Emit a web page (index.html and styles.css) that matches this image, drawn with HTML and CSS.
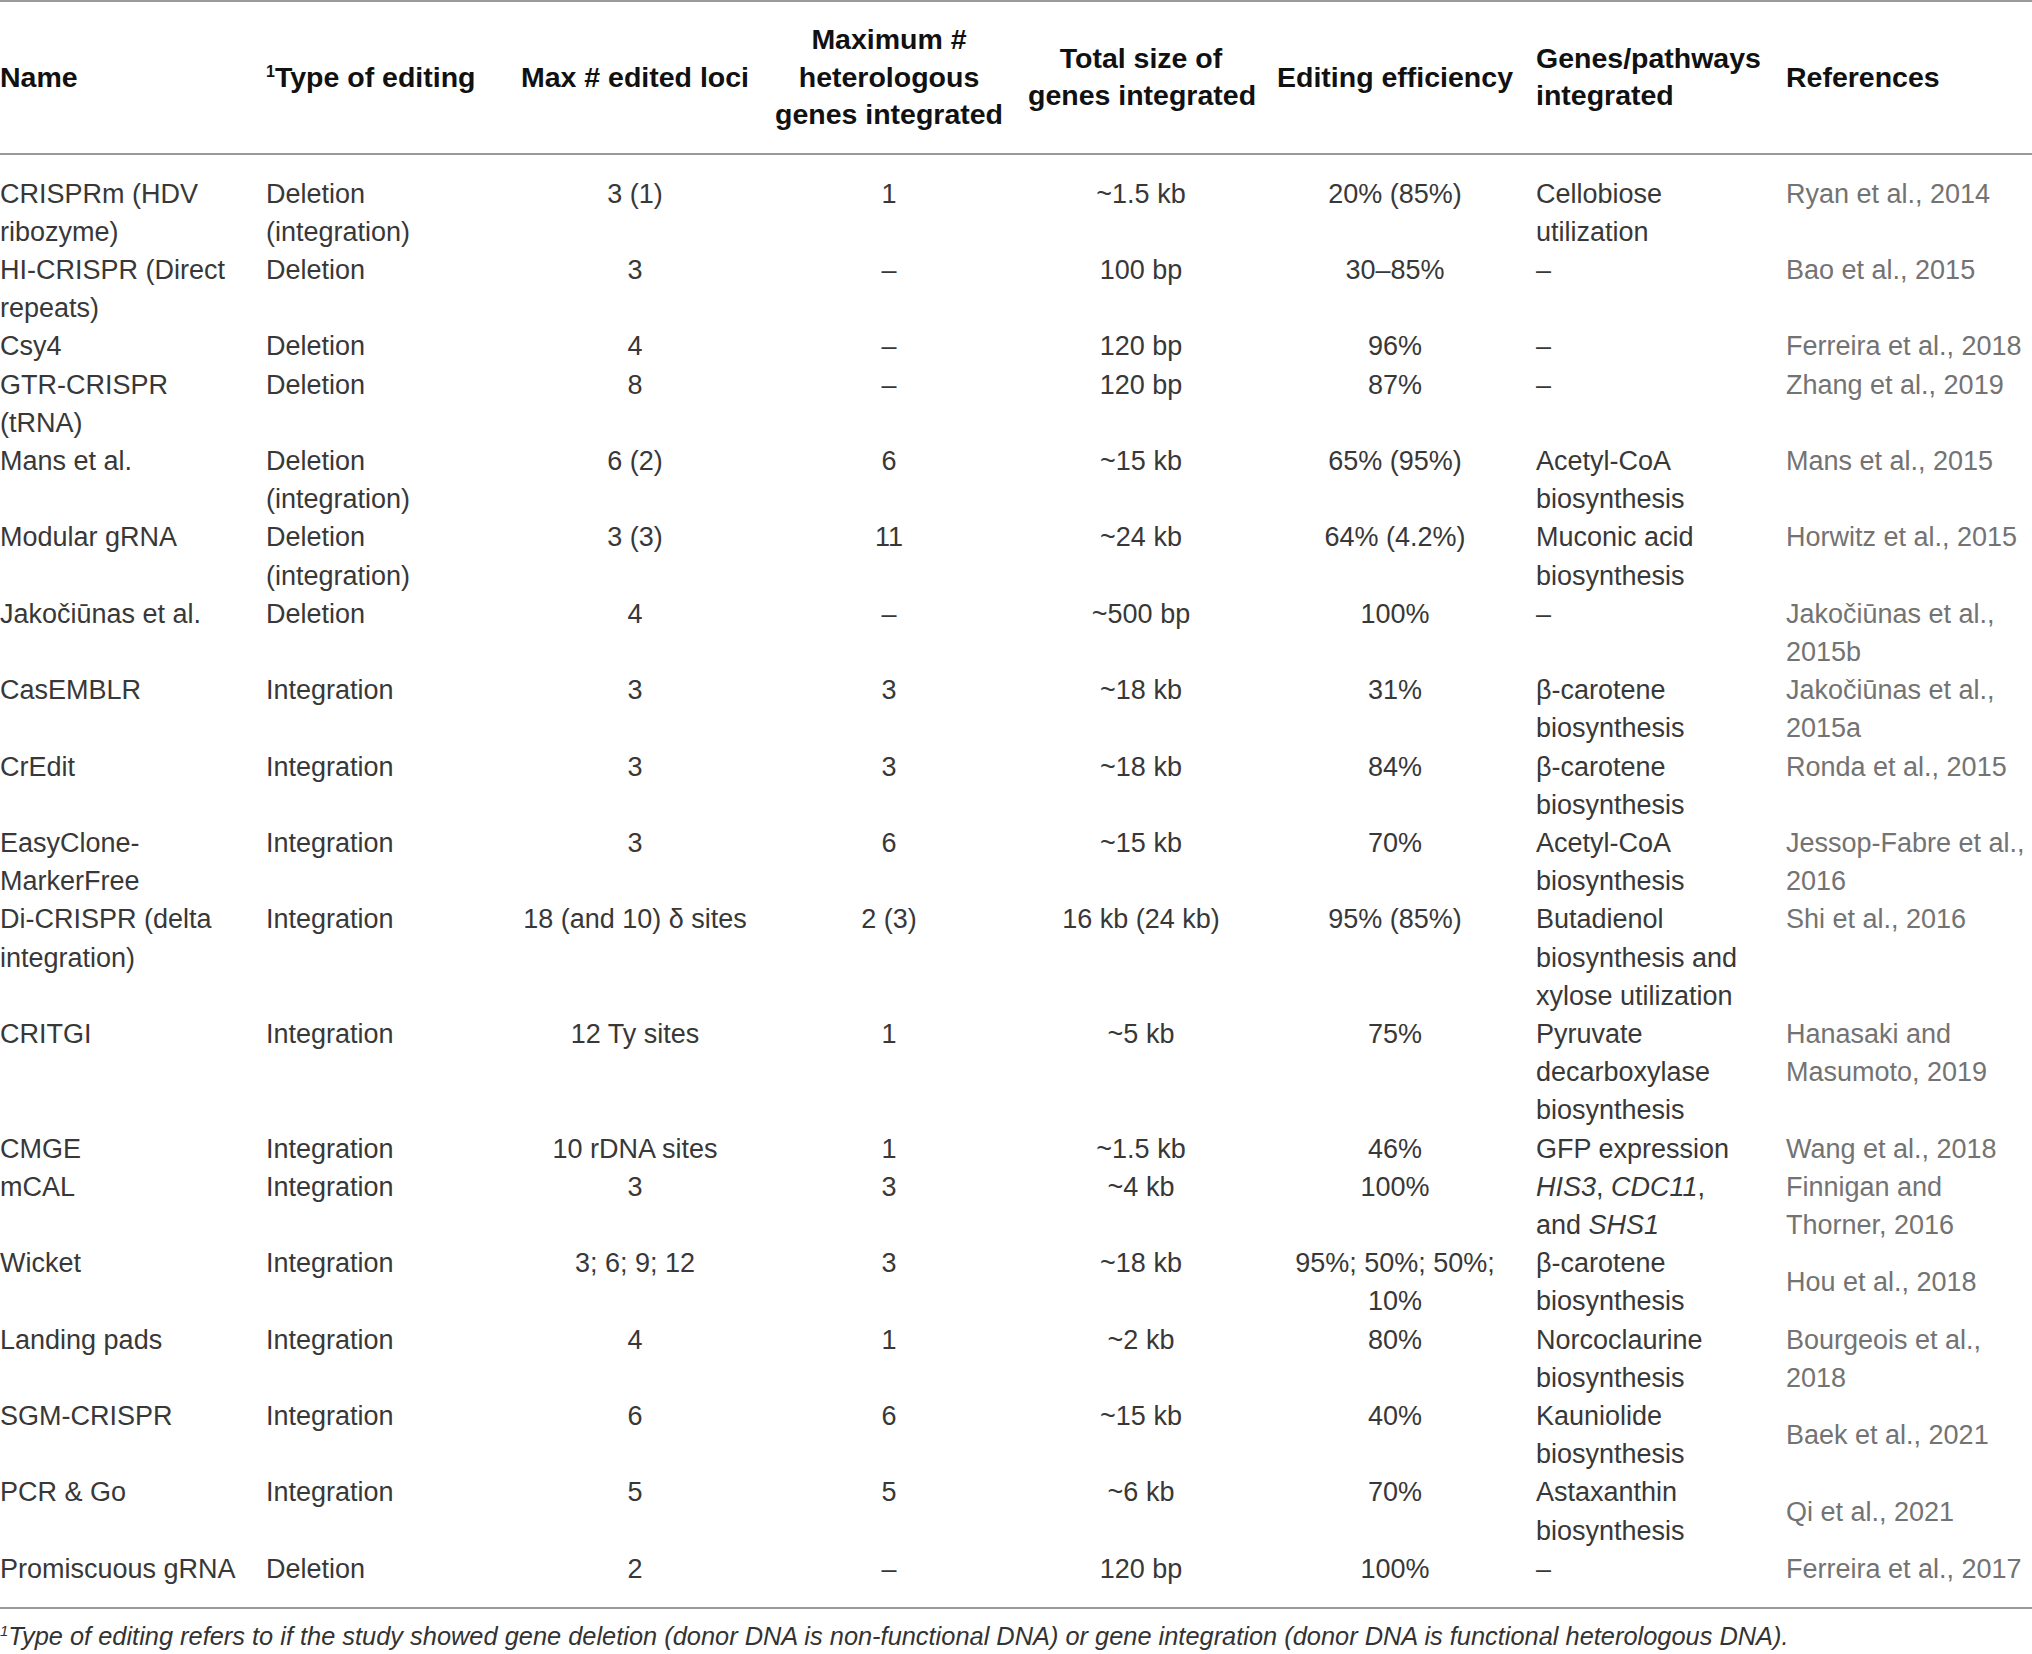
FILE: index.html
```html
<!DOCTYPE html>
<html>

<head>
  <meta charset="utf-8">
  <meta name="viewport" content="width=device-width">
  <title>CRISPR editing tools in yeast</title>
	<link rel="stylesheet" href="styles.css">
</head>

<body>
	<table class="tools">
		<colgroup>
			<col class="w-name">
			<col class="w-type">
			<col class="w-loci">
			<col class="w-het">
			<col class="w-size">
			<col class="w-eff">
			<col class="w-genes">
			<col class="w-refs">
		</colgroup>
		<thead>
			<tr>
				<th>Name</th>
				<th><sup>1</sup>Type of editing</th>
				<th class="c">Max # edited loci</th>
				<th class="c">Maximum #<br>heterologous<br>genes integrated</th>
				<th class="c">Total size of<br>genes integrated</th>
				<th class="c">Editing efficiency</th>
				<th>Genes/pathways<br>integrated</th>
				<th>References</th>
			</tr>
		</thead>
		<tbody>
			<tr>
				<td>CRISPRm (HDV<br>ribozyme)</td>
				<td>Deletion<br>(integration)</td>
				<td class="c">3 (1)</td>
				<td class="c">1</td>
				<td class="c">~1.5 kb</td>
				<td class="c">20% (85%)</td>
				<td>Cellobiose<br>utilization</td>
				<td class="ref">Ryan et al., 2014</td>
			</tr>
			<tr>
				<td>HI-CRISPR (Direct<br>repeats)</td>
				<td>Deletion</td>
				<td class="c">3</td>
				<td class="c">–</td>
				<td class="c">100 bp</td>
				<td class="c">30–85%</td>
				<td>–</td>
				<td class="ref">Bao et al., 2015</td>
			</tr>
			<tr>
				<td>Csy4</td>
				<td>Deletion</td>
				<td class="c">4</td>
				<td class="c">–</td>
				<td class="c">120 bp</td>
				<td class="c">96%</td>
				<td>–</td>
				<td class="ref">Ferreira et al., 2018</td>
			</tr>
			<tr>
				<td>GTR-CRISPR<br>(tRNA)</td>
				<td>Deletion</td>
				<td class="c">8</td>
				<td class="c">–</td>
				<td class="c">120 bp</td>
				<td class="c">87%</td>
				<td>–</td>
				<td class="ref">Zhang et al., 2019</td>
			</tr>
			<tr>
				<td>Mans et al.</td>
				<td>Deletion<br>(integration)</td>
				<td class="c">6 (2)</td>
				<td class="c">6</td>
				<td class="c">~15 kb</td>
				<td class="c">65% (95%)</td>
				<td>Acetyl-CoA<br>biosynthesis</td>
				<td class="ref">Mans et al., 2015</td>
			</tr>
			<tr>
				<td>Modular gRNA</td>
				<td>Deletion<br>(integration)</td>
				<td class="c">3 (3)</td>
				<td class="c">11</td>
				<td class="c">~24 kb</td>
				<td class="c">64% (4.2%)</td>
				<td>Muconic acid<br>biosynthesis</td>
				<td class="ref">Horwitz et al., 2015</td>
			</tr>
			<tr>
				<td>Jakočiūnas et al.</td>
				<td>Deletion</td>
				<td class="c">4</td>
				<td class="c">–</td>
				<td class="c">~500 bp</td>
				<td class="c">100%</td>
				<td>–</td>
				<td class="ref">Jakočiūnas et al.,<br>2015b</td>
			</tr>
			<tr>
				<td>CasEMBLR</td>
				<td>Integration</td>
				<td class="c">3</td>
				<td class="c">3</td>
				<td class="c">~18 kb</td>
				<td class="c">31%</td>
				<td>β-carotene<br>biosynthesis</td>
				<td class="ref">Jakočiūnas et al.,<br>2015a</td>
			</tr>
			<tr>
				<td>CrEdit</td>
				<td>Integration</td>
				<td class="c">3</td>
				<td class="c">3</td>
				<td class="c">~18 kb</td>
				<td class="c">84%</td>
				<td>β-carotene<br>biosynthesis</td>
				<td class="ref">Ronda et al., 2015</td>
			</tr>
			<tr>
				<td>EasyClone-<br>MarkerFree</td>
				<td>Integration</td>
				<td class="c">3</td>
				<td class="c">6</td>
				<td class="c">~15 kb</td>
				<td class="c">70%</td>
				<td>Acetyl-CoA<br>biosynthesis</td>
				<td class="ref">Jessop-Fabre et al.,<br>2016</td>
			</tr>
			<tr>
				<td>Di-CRISPR (delta<br>integration)</td>
				<td>Integration</td>
				<td class="c">18 (and 10) δ sites</td>
				<td class="c">2 (3)</td>
				<td class="c">16 kb (24 kb)</td>
				<td class="c">95% (85%)</td>
				<td>Butadienol<br>biosynthesis and<br>xylose utilization</td>
				<td class="ref">Shi et al., 2016</td>
			</tr>
			<tr>
				<td>CRITGI</td>
				<td>Integration</td>
				<td class="c">12 Ty sites</td>
				<td class="c">1</td>
				<td class="c">~5 kb</td>
				<td class="c">75%</td>
				<td>Pyruvate<br>decarboxylase<br>biosynthesis</td>
				<td class="ref">Hanasaki and<br>Masumoto, 2019</td>
			</tr>
			<tr>
				<td>CMGE</td>
				<td>Integration</td>
				<td class="c">10 rDNA sites</td>
				<td class="c">1</td>
				<td class="c">~1.5 kb</td>
				<td class="c">46%</td>
				<td>GFP expression</td>
				<td class="ref">Wang et al., 2018</td>
			</tr>
			<tr>
				<td>mCAL</td>
				<td>Integration</td>
				<td class="c">3</td>
				<td class="c">3</td>
				<td class="c">~4 kb</td>
				<td class="c">100%</td>
				<td><i>HIS3</i>, <i>CDC11</i>,<br>and <i>SHS1</i></td>
				<td class="ref">Finnigan and<br>Thorner, 2016</td>
			</tr>
			<tr>
				<td>Wicket</td>
				<td>Integration</td>
				<td class="c">3; 6; 9; 12</td>
				<td class="c">3</td>
				<td class="c">~18 kb</td>
				<td class="c">95%; 50%; 50%;<br>10%</td>
				<td>β-carotene<br>biosynthesis</td>
				<td class="ref mid">Hou et al., 2018</td>
			</tr>
			<tr>
				<td>Landing pads</td>
				<td>Integration</td>
				<td class="c">4</td>
				<td class="c">1</td>
				<td class="c">~2 kb</td>
				<td class="c">80%</td>
				<td>Norcoclaurine<br>biosynthesis</td>
				<td class="ref">Bourgeois et al.,<br>2018</td>
			</tr>
			<tr>
				<td>SGM-CRISPR</td>
				<td>Integration</td>
				<td class="c">6</td>
				<td class="c">6</td>
				<td class="c">~15 kb</td>
				<td class="c">40%</td>
				<td>Kauniolide<br>biosynthesis</td>
				<td class="ref mid">Baek et al., 2021</td>
			</tr>
			<tr>
				<td>PCR &amp; Go</td>
				<td>Integration</td>
				<td class="c">5</td>
				<td class="c">5</td>
				<td class="c">~6 kb</td>
				<td class="c">70%</td>
				<td>Astaxanthin<br>biosynthesis</td>
				<td class="ref mid">Qi et al., 2021</td>
			</tr>
			<tr>
				<td>Promiscuous gRNA</td>
				<td>Deletion</td>
				<td class="c">2</td>
				<td class="c">–</td>
				<td class="c">120 bp</td>
				<td class="c">100%</td>
				<td>–</td>
				<td class="ref">Ferreira et al., 2017</td>
			</tr>
		</tbody>
	</table>
	<p class="note"><sup>1</sup>Type of editing refers to if the study showed gene deletion (donor DNA is non-functional DNA) or gene integration (donor DNA is functional heterologous DNA).</p>
</body>

</html>
```

FILE: styles.css
```css
html {
  height: 100%;
  width: 100%;
}

body {
	margin: 0;
	background-color: #ffffff;
	color: #383838;
	font-family: "Liberation Sans", Arial, Helvetica, sans-serif;
}

.tools {
	width: 2032px;
	border-collapse: collapse;
	table-layout: fixed;
	font-size: 27px;
	line-height: 38.2px;
}

.w-name { width: 266px; }
.w-type { width: 254px; }
.w-loci { width: 230px; }
.w-het { width: 278px; }
.w-size { width: 226px; }
.w-eff { width: 282px; }
.w-genes { width: 250px; }
.w-refs { width: 246px; }

.tools th {
	padding: 19px 0;
	border-top: 2px solid #9a9a9a;
	border-bottom: 2px solid #9a9a9a;
	color: #111111;
	font-size: 28.5px;
	font-weight: bold;
	line-height: 37.5px;
	text-align: left;
	vertical-align: middle;
	white-space: nowrap;
}

.tools th sup {
	font-size: 16px;
	line-height: 0;
	vertical-align: 10px;
}

.tools td {
	padding: 0;
	text-align: left;
	vertical-align: top;
	white-space: nowrap;
}

.tools tbody tr:first-child td {
	padding-top: 20px;
}

.tools tbody tr:last-child td {
	padding-bottom: 19px;
	border-bottom: 2px solid #9a9a9a;
}

.tools .c {
	text-align: center;
}

.tools .ref {
	color: #737373;
}

.tools .mid {
	vertical-align: middle;
}

.note {
	margin: 12px 0 0;
	color: #333333;
	font-size: 25.4px;
	font-style: italic;
	line-height: 30px;
}

.note sup {
	font-size: 15px;
	line-height: 0;
	vertical-align: 9px;
}
```
